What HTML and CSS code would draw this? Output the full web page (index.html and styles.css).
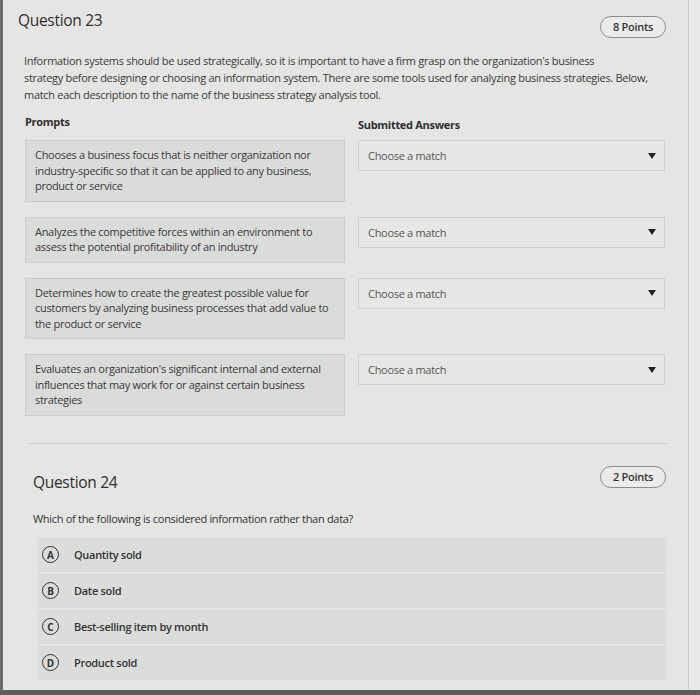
FILE: index.html
```html
<!DOCTYPE html>
<html>
<head>
<meta charset="utf-8">
<link rel="stylesheet" href="styles.css">
</head>
<body>
<div class="screen">
  <div class="panel">
    <section class="question q23">
      <div class="q-head">
        <h2 class="q-title">Question 23</h2>
        <span class="points">8 Points</span>
      </div>
      <p class="q-text">Information systems should be used strategically, so it is important to have a firm grasp on the organization's business<br>strategy before designing or choosing an information system. There are some tools used for analyzing business strategies. Below,<br>match each description to the name of the business strategy analysis tool.</p>
      <div class="match-grid">
        <div class="col-label">Prompts</div>
        <div class="col-label ans">Submitted Answers</div>
        <div class="prompt">Chooses a business focus that is neither organization nor industry-specific so that it can be applied to any business, product or service</div>
        <div class="select"><span>Choose a match</span><i class="caret"></i></div>
        <div class="prompt">Analyzes the competitive forces within an environment to assess the potential profitability of an industry</div>
        <div class="select"><span>Choose a match</span><i class="caret"></i></div>
        <div class="prompt">Determines how to create the greatest possible value for customers by analyzing business processes that add value to the product or service</div>
        <div class="select"><span>Choose a match</span><i class="caret"></i></div>
        <div class="prompt">Evaluates an organization's significant internal and external influences that may work for or against certain business strategies</div>
        <div class="select"><span>Choose a match</span><i class="caret"></i></div>
      </div>
    </section>
    <hr class="sep">
    <section class="question q24">
      <div class="q-head">
        <h2 class="q-title">Question 24</h2>
        <span class="points">2 Points</span>
      </div>
      <p class="q-text2">Which of the following is considered information rather than data?</p>
      <ul class="options">
        <li><span class="letter">A</span>Quantity sold</li>
        <li><span class="letter">B</span>Date sold</li>
        <li><span class="letter">C</span>Best-selling item by month</li>
        <li><span class="letter">D</span>Product sold</li>
      </ul>
    </section>
  </div>
  <div class="edge"></div>
</div>
<div class="bottom-band"></div>
</body>
</html>
```
FILE: styles.css
```css
html, body {
  margin: 0;
  padding: 0;
  background: #e5e6e4;
  font-family: "Open Sans", "Liberation Sans", sans-serif;
  color: #333;
}
.screen {
  display: flex;
  height: 690px;
  border-left: 3px solid #6b6c6a;
  box-sizing: border-box;
}
.panel {
  width: 686px;
  border-right: 1px solid #cdcecc;
  box-sizing: border-box;
  padding: 0 22px 0 15px;
}
.edge {
  flex: 1;
  background: #e9eae8;
}
.bottom-band {
  height: 5px;
  background: #5f605e;
}
.q-head {
  display: flex;
  justify-content: space-between;
  align-items: flex-start;
}
.q23 .q-head {
  padding-top: 9px;
}
.q-title {
  margin: 0;
  font-size: 15.5px;
  line-height: 22px;
  font-weight: 500;
  letter-spacing: -0.3px;
  color: #2e2e2e;
}
.points {
  display: inline-block;
  height: 22px;
  line-height: 20px;
  box-sizing: border-box;
  padding: 0 12px;
  border: 1px solid #8e8f8d;
  border-radius: 11px;
  font-size: 11px;
  font-weight: 600;
  letter-spacing: -0.3px;
  color: #333;
  background: #ebecea;
}
.q23 .points {
  margin-top: 7px;
}
.q-text {
  margin: 14px 0 0 6px;
  width: 660px;
  font-size: 11px;
  line-height: 17px;
  letter-spacing: -0.3px;
  color: #3a3a3a;
}
.match-grid {
  display: grid;
  grid-template-columns: 320px 307px;
  column-gap: 13px;
  row-gap: 15px;
  margin: 11px 0 0 7px;
  align-items: start;
}
.col-label {
  font-size: 11px;
  font-weight: 700;
  letter-spacing: -0.3px;
  margin-bottom: -7px;
  color: #2e2e2e;
}
.col-label.ans {
  margin-top: 3px;
}
.prompt {
  background: #dadcda;
  border: 1px solid #cbcdcb;
  padding: 6px 9px 7px;
  font-size: 11px;
  line-height: 15.5px;
  letter-spacing: -0.3px;
  color: #3a3a3a;
}
.select {
  height: 31px;
  box-sizing: border-box;
  border: 1px solid #cfd1cf;
  background: #e7e8e6;
  display: flex;
  align-items: center;
  justify-content: space-between;
  padding: 0 8px 0 9px;
  font-size: 11px;
  letter-spacing: -0.3px;
  color: #555;
}
.caret {
  width: 0;
  height: 0;
  border-left: 4px solid transparent;
  border-right: 4px solid transparent;
  border-top: 6px solid #222;
}
.sep {
  margin: 27px 0 0 10px;
  width: 640px;
  border: 0;
  border-top: 1px solid #cfd0ce;
}
.q24 .q-head {
  padding-top: 22px;
  padding-left: 15px;
}
.q24 .q-title {
  margin-top: 5px;
}
.q-text2 {
  margin: 18px 0 0 15px;
  font-size: 11px;
  letter-spacing: -0.3px;
  color: #333;
}
.options {
  list-style: none;
  margin: 12px 0 0 20px;
  padding: 0;
  width: 628px;
  display: flex;
  flex-direction: column;
  gap: 2px;
}
.options li {
  height: 34px;
  background: #dbdddb;
  display: flex;
  align-items: center;
  font-size: 11px;
  font-weight: 600;
  letter-spacing: -0.3px;
  color: #333;
  padding-left: 4px;
}
.letter {
  width: 17px;
  height: 17px;
  box-sizing: border-box;
  border: 1.5px solid #333;
  border-radius: 50%;
  display: inline-flex;
  align-items: center;
  justify-content: center;
  font-size: 10px;
  font-weight: 700;
  margin-right: 15px;
  letter-spacing: 0;
}
```
